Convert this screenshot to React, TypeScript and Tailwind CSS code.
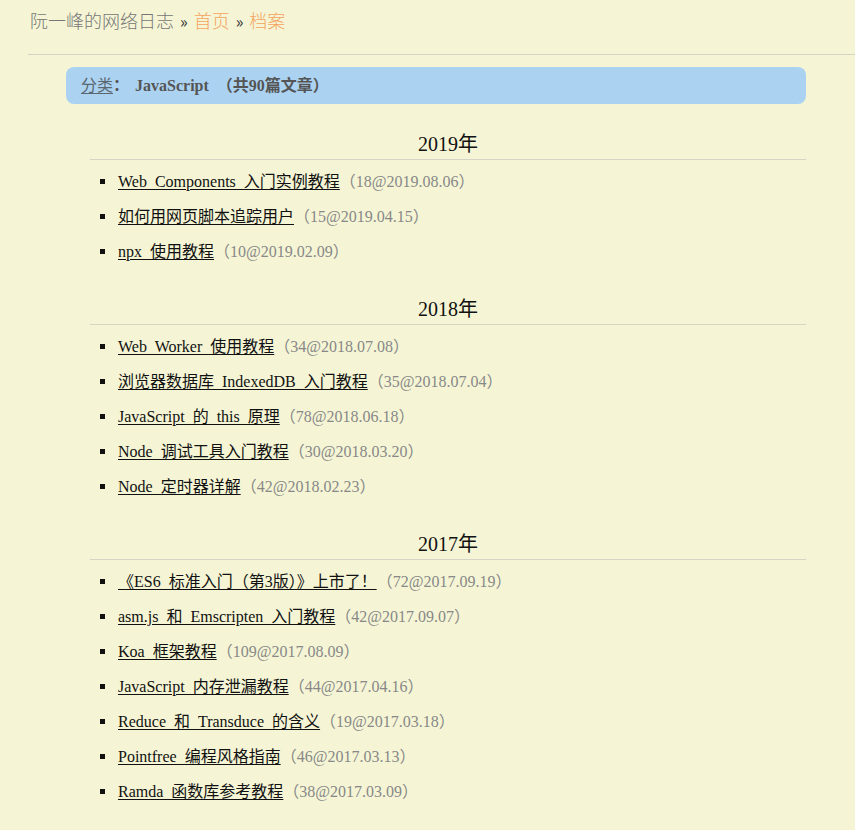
import React from "react";

type Item = { title: string; meta: string };
type Year = { year: string; items: Item[] };

const data: Year[] = [
  {
    year: "2019",
    items: [
      { title: "Web Components 入门实例教程", meta: "18@2019.08.06" },
      { title: "如何用网页脚本追踪用户", meta: "15@2019.04.15" },
      { title: "npx 使用教程", meta: "10@2019.02.09" },
    ],
  },
  {
    year: "2018",
    items: [
      { title: "Web Worker 使用教程", meta: "34@2018.07.08" },
      { title: "浏览器数据库 IndexedDB 入门教程", meta: "35@2018.07.04" },
      { title: "JavaScript 的 this 原理", meta: "78@2018.06.18" },
      { title: "Node 调试工具入门教程", meta: "30@2018.03.20" },
      { title: "Node 定时器详解", meta: "42@2018.02.23" },
    ],
  },
  {
    year: "2017",
    items: [
      { title: "《ES6 标准入门（第3版）》上市了！", meta: "72@2017.09.19" },
      { title: "asm.js 和 Emscripten 入门教程", meta: "42@2017.09.07" },
      { title: "Koa 框架教程", meta: "109@2017.08.09" },
      { title: "JavaScript 内存泄漏教程", meta: "44@2017.04.16" },
      { title: "Reduce 和 Transduce 的含义", meta: "19@2017.03.18" },
      { title: "Pointfree 编程风格指南", meta: "46@2017.03.13" },
      { title: "Ramda 函数库参考教程", meta: "38@2017.03.09" },
    ],
  },
];

export default function App() {
  return (
    <div
      className="min-h-[830px] w-full bg-[#f5f5d5] pb-[20px]"
      style={{ fontFamily: 'Georgia, "Liberation Serif", "Noto Sans CJK SC", serif' }}
    >
      <div
        className="h-[54px] pl-[30px] pt-[8px] text-[18px] leading-[24px] text-[#777]"
        style={{ fontFamily: '"Noto Sans CJK SC", sans-serif' }}
      >
        <span className="font-light">阮一峰的网络日志</span>
        <span className="mx-[6px] text-[16px] text-[#333]">»</span>
        <span className="font-light text-[#f4a460]">首页</span>
        <span className="mx-[6px] text-[16px] text-[#333]">»</span>
        <span className="font-light text-[#f4a460]">档案</span>
      </div>
      <div className="ml-[28px] border-t border-[#d4d4c4]" />
      <div className="ml-[66px] mt-[12px] w-[740px]">
        <div className="flex h-[37px] items-center rounded-[8px] bg-[#abd3f1] pl-[15px] text-[16px] text-[#555]">
          <span className="text-[#5a6670] underline underline-offset-2">分类</span>
          <span className="mr-[6px] font-bold">：</span>
          <span className="font-bold [word-spacing:4px]">JavaScript （共90篇文章）</span>
        </div>
        <div className="ml-[24px] w-[716px]">
          {data.map((y) => (
            <div key={y.year} className="mt-[25px]">
              <div className="h-[31px] border-b border-[#d6d6c6] text-center text-[20px] leading-[30px] text-[#111]">
                {y.year}年
              </div>
              <ul className="mt-[4px]">
                {y.items.map((it) => (
                  <li key={it.title} className="flex h-[35px] items-center text-[16px]">
                    <span className="ml-[10px] mr-[13px] block h-[5px] w-[5px] bg-[#111]" />
                    <span className="text-[#111] underline underline-offset-2 [word-spacing:4px]">{it.title}</span>
                    <span className="text-[#888]">（{it.meta}）</span>
                  </li>
                ))}
              </ul>
            </div>
          ))}
        </div>
      </div>
    </div>
  );
}
